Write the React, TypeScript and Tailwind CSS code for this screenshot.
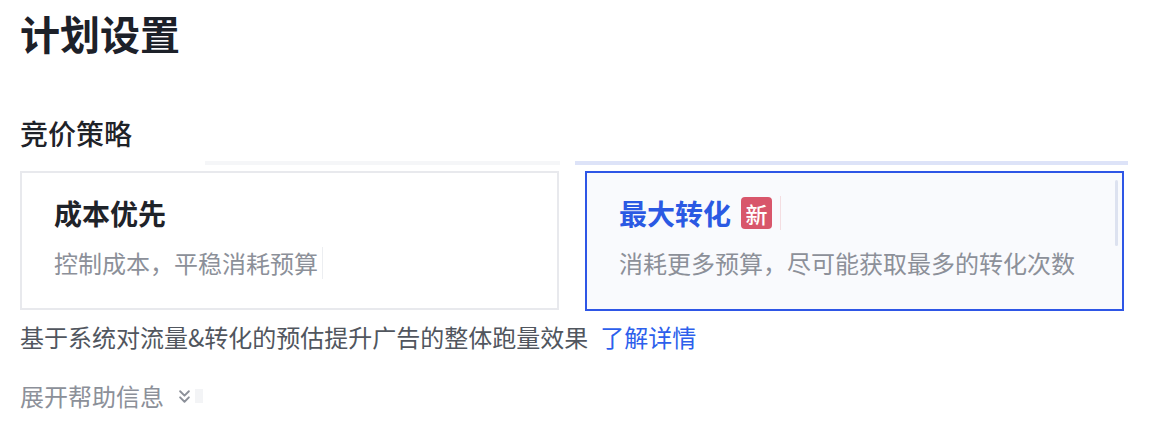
import { ChevronsDown } from 'lucide-react'

const font = { fontFamily: '"Noto Sans CJK SC", "Noto Sans", sans-serif' }

function StrategyCard({
  title,
  desc,
  active,
}: {
  title: string
  desc: string
  active?: boolean
}) {
  return (
    <div
      className={
        active
          ? 'relative h-[140px] border-2 border-[#2e56e6] bg-[#f9fafd] pl-[32px] pt-[22px]'
          : 'relative h-[139px] border-2 border-[#e8e9ed] bg-white pl-[32px] pt-[22px]'
      }
    >
      <div className="flex h-[36px] items-center">
        <span
          className={
            active
              ? 'text-[28px] leading-[36px] font-bold text-[#2b59e3]'
              : 'text-[28px] leading-[36px] font-bold text-[#1f2329]'
          }
        >
          {title}
        </span>
        {active && (
          <>
            <span className="ml-[10px] flex h-[32px] w-[31px] items-center justify-center rounded-[4px] bg-[#d8566b] text-[22px] leading-none font-medium text-white">
              新
            </span>
            <span className="ml-[8px] h-[34px] w-px bg-[#f4dde1]" />
          </>
        )}
      </div>
      <div className="mt-[16px] flex h-[32px] items-center">
        <span className="text-[24px] leading-[32px] text-[#8c9099]">{desc}</span>
        {!active && <span className="ml-[4px] h-[32px] w-px bg-[#eceef1]" />}
      </div>
      {/* scroll thumb */}
      {active && (
        <div className="absolute top-[7px] right-[4px] h-[66px] w-[3px] rounded-full bg-[#dde2f0]" />
      )}
    </div>
  )
}

export default function App() {
  return (
    <div className="min-h-[422px] w-[1152px] bg-white pl-[20px] pt-[9px]" style={font}>
      {/* Page title */}
      <h1 className="text-[40px] leading-[48px] font-bold text-[#1d2129]">计划设置</h1>

      {/* Section */}
      <h2 className="mt-[58px] text-[28px] leading-[36px] font-medium text-[#1f2329]">竞价策略</h2>

      <div className="mt-[10px] flex h-[4px] w-[1108px]">
        <div className="ml-[185px] w-[355px] bg-[#f5f6f8]" />
        <div className="ml-[15px] flex-1 bg-[#dde3f8]" />
      </div>

      <div className="mt-[6px] grid w-[1104px] grid-cols-2 items-start gap-[26px]">
        <StrategyCard title="成本优先" desc="控制成本，平稳消耗预算" />
        <StrategyCard title="最大转化" desc="消耗更多预算，尽可能获取最多的转化次数" active />
      </div>

      <p className="mt-[10px] text-[24px] leading-[32px] text-[#51565e]">
        基于系统对流量&amp;转化的预估提升广告的整体跑量效果
        <a className="ml-[12px] cursor-pointer text-[#2d5fec]">了解详情</a>
      </p>

      <div className="mt-[27px] flex h-[32px] items-center text-[24px] leading-[32px] text-[#8c9099]">
        <span>展开帮助信息</span>
        <ChevronsDown className="ml-[10px] h-[21px] w-[21px] text-[#8c9099]" strokeWidth={2.2} />
        <span className="h-[14px] w-[8px] bg-[#f3f4f6]" />
      </div>
    </div>
  )
}
